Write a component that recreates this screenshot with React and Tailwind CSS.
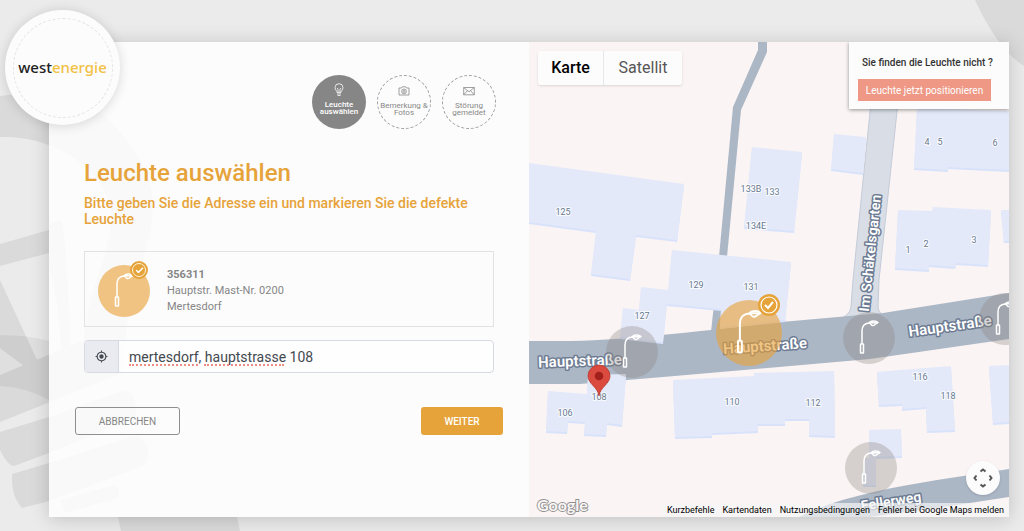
import { useState } from "react";
import { FiCheck } from "react-icons/fi";
import { MdMyLocation } from "react-icons/md";

const steps = [
  { label: ["Leuchte", "auswählen"], icon: "bulb", active: true },
  { label: ["Bemerkung &", "Fotos"], icon: "camera" },
  { label: ["Störung", "gemeldet"], icon: "mail" }
];

const buildings = [
  "0,123 155,144 148,200 107,195 101,239 62,234 67,191 0,182",
  "223,107 273,112 265,191 215,187",
  "305,94 337,97 334,133 302,129",
  "388,68 480,71 480,130 419,127 419,130 385,128",
  "369,170 403,171 404,167 462,170 459,225 427,223 426,227 400,225 400,230 366,228",
  "472,170 480,170 480,201 475,201",
  "143,210 262,222 256,280 191,287 192,269 138,264",
  "112,247 139,250 134,302 91,297 94,268 110,270",
  "19,351 58,354 59,335 97,334 93,385 78,383 77,395 55,394 56,382 39,381 38,392 17,391",
  "144,340 225,336 225,333 305,331 306,396 280,395 280,379 256,379 256,384 229,384 229,391 183,393 183,396 146,397",
  "348,332 371,330 422,326 426,390 398,391 397,367 373,369 373,364 350,365",
  "460,326 480,325 480,382 464,383",
  "340,390 372,389 373,416 347,417 347,445 334,445 335,418 340,418"
];

const houseNumbers = [
  ["125", 34, 170], ["133B", 222, 147], ["133", 243, 150], ["134E", 227, 184],
  ["129", 167, 243], ["131", 222, 245], ["127", 113, 274], ["106", 36, 371],
  ["108", 70, 355], ["110", 203, 360], ["112", 284, 361], ["116", 391, 335],
  ["118", 419, 354], ["4", 398, 100], ["5", 411, 100], ["6", 466, 101],
  ["1", 379, 208], ["2", 397, 202], ["3", 445, 198]
];

const streets = [
  { name: "Hauptstraße", x: 51, y: 319, angle: -2, size: 15 },
  { name: "Hauptstraße", x: 236, y: 304, angle: -4, size: 15 },
  { name: "Hauptstraße", x: 421, y: 284, angle: -8, size: 15 },
  { name: "Im Schäkelsgarten", x: 341, y: 211, angle: -84, size: 14 },
  { name: "Fellerweg", x: 362, y: 459, angle: -9, size: 14 }
];

const lamps = [[103, 310], [340, 296], [476, 277], [342, 426]];

const LampShape = () => (
  <g fill="none" stroke="#fff" strokeWidth="1.5" strokeLinejoin="round">
    <path d="M-7 6V-7C-7-12-4-15 1-15" />
    <path d="M0-15C2-17.5 7-17.5 9-15.5L6-13.5C4-11.5 2-12.5 1-15Z" />
    <path d="M0-15.2H9" />
    <rect x="-8.5" y="6" width="3" height="9" rx="0.5" />
  </g>
);

const StepIcon = ({ name }) => (
  <svg viewBox="0 0 12 14" className="h-3.5 w-3" fill="none" stroke="currentColor" strokeWidth="0.8" aria-hidden="true">
    {name === "bulb" && (
      <>
        <path d="M4 9.5C4 7.5 2 7 2 4.7A4 4 0 0 1 10 4.7C10 7 8 7.5 8 9.5Z" />
        <path d="M4 11H8M4.5 12.5H7.5M5 9V6L4 5M7 9V6L8 5" />
      </>
    )}
    {name === "camera" && (
      <>
        <path d="M1 4H3.5L4.3 2.8H7.7L8.5 4H11V11H1Z" />
        <circle cx="6" cy="7.4" r="2.4" />
        <circle cx="6" cy="7.4" r="1" />
      </>
    )}
    {name === "mail" && <path d="M0.7 3.5H11.3V10.8H0.7ZM0.7 3.5L6 7.8L11.3 3.5M0.7 10.8L4.5 6.6M11.3 10.8L7.5 6.6" />}
  </svg>
);

const Backdrop = () => (
  <svg className="absolute left-0 top-0 h-[531px] w-full" viewBox="0 0 1024 531" preserveAspectRatio="xMinYMin slice" aria-hidden="true">
    <g fill="#dadada">
      <path d="M0 96C50 90 85 98 106 117C135 145 153 175 153 207C153 245 128 290 125 345V372L0 422V375L84 340C84 300 111 255 111 215C109 175 60 135 0 137Z" />
      <path d="M0 244L49 230V253L0 266Z" />
      <path d="M49 225L58 220Q62 220 63 226C67 255 69 300 70 348L61 350C60 310 53 280 49 268Z" />
      <path d="M0 280L38 362L28 369L0 348Z" />
      <path d="M0 432L49 417L122 391Q130 388 134 398Q139 414 134 418L49 453L14 466Q8 466 0 450Z" />
      <path d="M12 474L49 463L134 436Q143 434 148 450Q150 463 141 467L49 501L22 508Q11 496 12 474Z" />
      <path d="M61 500L113 485Q119 484 119 495Q118 499 112 500L65 513Z" />
      <path d="M118 517H237L240 531H121Z" />
      <path d="M975 0H1024V66Q998 50 975 0Z" />
    </g>
    <path d="M0 335Q28 335 49 341V400Q25 387 0 386Z" fill="#000" opacity="0.05" />
  </svg>
);

const LampBadge = () => (
  <span className="relative block h-[52px] w-[52px] rounded-full bg-[#f0c382]">
    <svg viewBox="-26 -26 52 52" className="h-full w-full" aria-hidden="true">
      <LampShape />
    </svg>
    <span className="absolute -top-1 right-0.5 flex h-[18px] w-[18px] items-center justify-center rounded-full border-2 border-[#e6a33a] bg-[#e6a33a] text-white outline-1 -outline-offset-3 outline-[#fff3dc]">
      <FiCheck size={9} strokeWidth={4} />
    </span>
  </span>
);

const StreetMap = () => (
  <svg className="absolute inset-0 h-full w-full" viewBox="0 0 480 475" preserveAspectRatio="xMidYMid slice" role="img" aria-label="Karte" fontFamily="Roboto, sans-serif">
    <rect width="480" height="475" fill="#faf4f4" />
    <path d="M342 60H369L350 238L349 264Q349 270 354 273L308 278Q321 274 322 265L324 238Z" fill="#d9dee6" stroke="#c3cbd8" />
    <g fill="#acb7c6">
      <path d="M229 0H238V10L212 68L198 215L191 290H182L190 215L204 65L229 8Z" />
      <path d="M0 299H43C100 298 200 286 241 281L354 271L480 251V297L341 317L134 335L51 342H0Z" />
      <path d="M270 475C310 455 360 446 408 438L480 427V455L408 466L340 475Z" />
    </g>
    <g fill="#d8e3fb">
      {buildings.map((points) => (
        <polygon key={points} points={points} />
      ))}
    </g>
    <g fill="#e4e9f9" transform="translate(0 -2)">
      {buildings.map((points) => (
        <polygon key={points} points={points} />
      ))}
    </g>
    <g fontSize="9" fill="#68798f" stroke="#fafbff" strokeWidth="2" paintOrder="stroke" textAnchor="middle">
      {houseNumbers.map(([label, x, y]) => (
        <text key={label} x={x} y={y + 3}>{label}</text>
      ))}
    </g>
    <g fontWeight="600" fill="#fff" stroke="#6c7b92" strokeWidth="3" strokeLinejoin="round" paintOrder="stroke" textAnchor="middle">
      {streets.map((street) => (
        <text
          key={street.x}
          transform={`translate(${street.x} ${street.y}) rotate(${street.angle})`}
          y="5"
          fontSize={street.size}
        >
          {street.name}
        </text>
      ))}
    </g>
    {lamps.map(([x, y]) => (
      <g key={x} transform={`translate(${x} ${y})`}>
        <circle r="26" fill="#8c8782" opacity="0.34" />
        <LampShape />
      </g>
    ))}
    <g transform="translate(220 291)">
      <circle r="33" fill="#e8a23a" opacity="0.62" />
      <g transform="scale(1.3)">
        <LampShape />
      </g>
      <circle cx="20" cy="-28" r="11" fill="#e6a33a" />
      <circle cx="20" cy="-28" r="8" fill="none" stroke="#fff" strokeWidth="1.2" />
      <path d="M16-28L19-25L24-31" fill="none" stroke="#fff" strokeWidth="2" />
    </g>
    <g transform="translate(70 354)">
      <path d="M0 0C-1-9-11-12-11-20A11 11 0 0 1 11-20C11-12 1-9 0 0Z" fill="#db4a3e" stroke="#b83a30" strokeWidth="0.8" />
      <circle cy="-20" r="4.3" fill="#a2201b" />
    </g>
  </svg>
);

const App = () => {
  const [address, setAddress] = useState("mertesdorf, hauptstrasse 108");

  return (
    <div className="relative flex min-h-screen flex-col overflow-hidden bg-[#ebebeb] pb-3.5 pl-[49px] pr-[15px] pt-[42px] font-['Roboto',sans-serif]">
      <Backdrop />

      <main className="relative grid flex-1 grid-cols-2 shadow-[0_2px_18px_rgba(0,0,0,0.18)]">
        <section className="bg-white/85 px-[26px] pb-6 pt-[33px]">
          <ol className="flex justify-end gap-[11px] pr-[7px]">
            {steps.map((step) => (
              <li
                key={step.icon}
                className={`flex h-[54px] w-[54px] flex-col items-center rounded-full pt-2 text-center text-[8px] leading-[7px] ${step.active ? "bg-[#868686] font-medium text-white" : "border border-dashed border-[#999] text-[#888]"}`}
              >
                <StepIcon name={step.icon} />
                <span className="mt-1 whitespace-nowrap">
                  {step.label[0]}
                  <br />
                  {step.label[1]}
                </span>
              </li>
            ))}
          </ol>

          <div className="px-[9px]">
            <h1 className="mt-7 text-2xl font-medium leading-8 text-[#e6a33a]">Leuchte auswählen</h1>
            <p className="mt-1.5 text-sm font-medium leading-4 text-[#e6a33a]">
              Bitte geben Sie die Adresse ein und markieren Sie die defekte Leuchte
            </p>

            <div className="mt-6 flex h-[76px] items-center gap-[17px] border border-[#e2e2e2] px-[13px]">
              <div className="pt-1">
                <LampBadge />
              </div>
              <div className="pt-1 text-[11px] leading-4 text-[#868686]">
                <p className="font-bold">356311</p>
                <p>Hauptstr. Mast-Nr. 0200</p>
                <p>Mertesdorf</p>
              </div>
            </div>

            <div className="relative mt-[13px] flex h-[33px] overflow-hidden rounded-sm border border-[#d6dae3] bg-white/60">
              <button type="button" aria-label="Standort" className="flex w-[34px] items-center justify-center border-r border-[#d6dae3] bg-[#e9ebf0] text-[#444950]">
                <MdMyLocation size={13} />
              </button>
              <input
                aria-label="Adresse"
                value={address}
                spellCheck={false}
                onChange={(e) => setAddress(e.target.value)}
                className="min-w-0 flex-1 bg-transparent px-2.5 text-sm text-[#444950] outline-none"
              />
              <span className="pointer-events-none absolute bottom-1.5 left-11 flex gap-1.5">
                <span className="w-[69px] border-b-2 border-dotted border-[#ee8d84]" />
                <span className="w-20 border-b-2 border-dotted border-[#ee8d84]" />
              </span>
            </div>
          </div>

          <div className="mt-[34px] flex justify-between">
            <button type="button" className="h-7 w-[105px] rounded-[3px] border border-[#8f8f8f] text-[10px] text-[#868686]">ABBRECHEN</button>
            <button type="button" className="h-7 w-[82px] rounded-[3px] bg-[#e6a33a] text-[10px] font-medium text-white">WEITER</button>
          </div>
        </section>

        <section className="relative flex flex-col justify-between overflow-hidden">
          <StreetMap />

          <div className="relative flex items-start justify-between">
            <div className="ml-[9px] mt-[9px] flex h-[34px] divide-x divide-gray-200 rounded-xs bg-[#fcfcfc] text-base shadow-sm">
              <button type="button" className="w-[66px] font-medium text-black">Karte</button>
              <button type="button" className="w-[78px] text-[#565656]">Satellit</button>
            </div>
            <div className="w-40 bg-[#fcfcfc] px-[9px] pb-2 pt-[13px] shadow-[0_1px_4px_rgba(0,0,0,0.4)]">
              <p className="whitespace-nowrap pl-1 text-[10px] font-medium leading-4 text-[#333]">Sie finden die Leuchte nicht ?</p>
              <button type="button" className="mt-2 block h-[22px] w-[133px] bg-[#ee9885] text-[10px] text-white">Leuchte jetzt positionieren</button>
            </div>
          </div>

          <div className="relative">
            <div className="flex justify-end pb-1.5 pr-[9px]">
              <button type="button" aria-label="Kamerasteuerung" className="flex h-[34px] w-[34px] items-center justify-center rounded-full bg-[#fcfcfc] shadow">
                <svg viewBox="0 0 20 20" className="h-5 w-5" fill="none" stroke="#555" strokeWidth="2" aria-hidden="true">
                  <path d="M7.5 3.5L10 1.5L12.5 3.5M7.5 16.5L10 18.5L12.5 16.5M3.5 7.5L1.5 10L3.5 12.5M16.5 7.5L18.5 10L16.5 12.5" />
                </svg>
              </button>
            </div>
            <div className="-mt-1.5 flex items-end justify-between">
              <svg viewBox="0 0 56 22" className="ml-1.5 h-[22px] w-14" role="img" aria-label="Google">
                <text x="2" y="16" fontSize="16" fontFamily="Lato, sans-serif" fontWeight="700" fill="#faf6f6" stroke="#8f8f8f" strokeWidth="1.8" paintOrder="stroke">Google</text>
              </svg>
              <div className="flex h-3.5 items-center gap-2 bg-[#f5f5f5]/70 px-[5px] text-[9px] leading-3 text-black">
                <a href="#kurzbefehle">Kurzbefehle</a>
                <a href="#kartendaten">Kartendaten</a>
                <a href="#nutzung">Nutzungsbedingungen</a>
                <a href="#fehler">Fehler bei Google Maps melden</a>
              </div>
            </div>
          </div>
        </section>
      </main>

      <div className="absolute left-[5px] top-2.5 flex h-[115px] w-[115px] items-center justify-center rounded-full bg-[#fcfcfc] shadow-[0_1px_12px_rgba(0,0,0,0.15)]">
        <div className="flex h-[100px] w-[100px] items-center justify-center rounded-full border border-dashed border-[#e4e4e4]">
          <span className="font-['Noto_Sans',sans-serif] text-[15px] font-medium text-[#222]">
            west<span className="text-[#f2c144]">energie</span>
          </span>
        </div>
      </div>
    </div>
  );
};

export default App;
